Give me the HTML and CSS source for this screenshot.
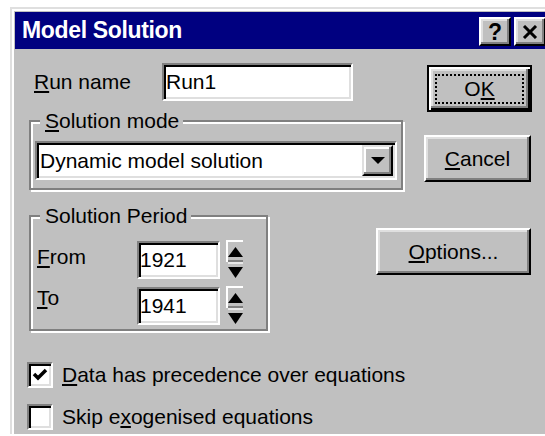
FILE: index.html
```html
<!DOCTYPE html>
<html lang="en">
<head>
<meta charset="utf-8">
<title>Model Solution</title>
<link rel="stylesheet" href="styles.css">
</head>
<body>
<div class="window">
  <div class="frame">
    <div class="titlebar">
      <span class="title">Model Solution</span>
      <span class="cap-btn help">?</span>
      <span class="cap-btn close">
        <svg width="16" height="14" viewBox="0 0 16 14"><path d="M2 1 L14 13 M14 1 L2 13" stroke="#000" stroke-width="3" fill="none"/></svg>
      </span>
    </div>

    <div class="content">
      <div class="row row-top">
        <div class="col-left">
          <div class="run-row">
            <span class="run-label"><u>R</u>un name</span>
            <div class="field run-field">Run1</div>
          </div>
          <div class="group mode-group">
            <span class="group-title"><u>S</u>olution mode</span>
            <div class="combo">
              <span class="combo-text">Dynamic model solution</span>
              <span class="combo-btn">
                <svg width="14" height="8" viewBox="0 0 14 8"><path d="M0 0 H14 L7 7 Z" fill="#000"/></svg>
              </span>
            </div>
          </div>
        </div>
        <div class="col-right">
          <button class="btn default ok"><span class="focus">O<u>K</u></span></button>
          <button class="btn cancel"><u>C</u>ancel</button>
        </div>
      </div>

      <div class="row row-mid">
        <div class="group period-group">
          <span class="group-title">Solution Period</span>
          <div class="period-row">
            <span class="period-label"><u>F</u>rom</span>
            <div class="field year">1921</div>
            <svg class="spin" width="18" height="40" viewBox="0 0 18 40">
              <rect x="0" y="0" width="17" height="2" fill="#fff"/>
              <rect x="0" y="0" width="2" height="22" fill="#fff"/>
              <path d="M2 17 H17 L9.5 7 Z" fill="#000"/>
              <rect x="2" y="20" width="15" height="2" fill="#808080"/>
              <rect x="2" y="22" width="15" height="2" fill="#e8e8e8"/>
              <path d="M2 27 H17 L9.5 38 Z" fill="#000"/>
            </svg>
          </div>
          <div class="period-row">
            <span class="period-label to-label"><u>T</u>o</span>
            <div class="field year">1941</div>
            <svg class="spin" width="18" height="40" viewBox="0 0 18 40">
              <rect x="0" y="0" width="17" height="2" fill="#fff"/>
              <rect x="0" y="0" width="2" height="22" fill="#fff"/>
              <path d="M2 17 H17 L9.5 7 Z" fill="#000"/>
              <rect x="2" y="20" width="15" height="2" fill="#808080"/>
              <rect x="2" y="22" width="15" height="2" fill="#e8e8e8"/>
              <path d="M2 27 H17 L9.5 38 Z" fill="#000"/>
            </svg>
          </div>
        </div>
        <button class="btn options"><u>O</u>ptions...</button>
      </div>

      <div class="checks">
        <div class="check-row">
          <span class="checkbox">
            <svg width="18" height="18" viewBox="0 0 18 18"><path d="M3 8 L7 12 L15 4" stroke="#000" stroke-width="3.5" fill="none"/></svg>
          </span>
          <span><u>D</u>ata has precedence over equations</span>
        </div>
        <div class="check-row">
          <span class="checkbox"></span>
          <span>Skip e<u>x</u>ogenised equations</span>
        </div>
      </div>
    </div>
  </div>
</div>
</body>
</html>
```

FILE: styles.css
```css
html, body {
  margin: 0;
  padding: 0;
}

body {
  background: #fff;
  overflow: hidden;
  width: 545px;
  height: 436px;
  font-family: "Liberation Sans", Arial, sans-serif;
  font-size: 21px;
  line-height: 24px;
  color: #000;
}

u {
  text-decoration-thickness: 2px;
  text-underline-offset: 2px;
}

/* window frame */
.window {
  margin: 7px 0 0 10px;
  width: 560px;
  height: 427px;
  box-sizing: border-box;
  border-top: 2px solid #dfdfdf;
  border-left: 2px solid #dfdfdf;
  background: #c0c0c0;
}

.frame {
  height: 100%;
  box-sizing: border-box;
  border-top: 2px solid #fff;
  border-left: 2px solid #fff;
  padding: 1px 0 0 1px;
}

/* caption */
.titlebar {
  height: 37px;
  background: #000080;
  display: flex;
  align-items: center;
  padding-left: 7px;
}

.title {
  color: #fff;
  font-weight: bold;
  font-size: 23px;
  letter-spacing: -0.35px;
  margin-top: -1px;
}

.cap-btn {
  width: 32px;
  height: 29px;
  box-sizing: border-box;
  align-self: flex-start;
  margin-top: 5px;
  background: #c0c0c0;
  border: 2px solid;
  border-color: #fff #000 #000 #fff;
  box-shadow: inset -2px -2px 0 #808080, inset 2px 2px 0 #dfdfdf;
  display: flex;
  align-items: center;
  justify-content: center;
}

.help {
  margin-left: auto;
  font-weight: bold;
  font-size: 23px;
}

.close {
  margin-left: 3px;
  margin-right: 24px;
}

/* dialog body */
.content {
  width: 517px;
  box-sizing: border-box;
  padding: 14px 0 0 14px;
}

.row {
  display: flex;
  justify-content: space-between;
  align-items: flex-start;
}

.col-left {
  width: 374px;
}

.col-right {
  display: flex;
  flex-direction: column;
  align-items: flex-end;
}

.run-row {
  display: flex;
  align-items: center;
  height: 38px;
}

.run-label {
  width: 128px;
  margin-left: 5px;
}

.field {
  height: 38px;
  box-sizing: border-box;
  background: #fff;
  border: 2px solid;
  border-color: #808080 #fff #fff #808080;
  box-shadow: inset 2px 2px 0 #000, inset -2px -2px 0 #dfdfdf;
  display: flex;
  align-items: center;
  padding-left: 2px;
  white-space: nowrap;
}

.run-field {
  width: 191px;
}

/* etched group boxes */
.group {
  position: relative;
  box-sizing: border-box;
  border: 2px solid #808080;
  box-shadow: inset 2px 2px 0 #fff, 2px 2px 0 #fff;
}

.group-title {
  position: absolute;
  top: -13px;
  left: 9px;
  padding: 0 4px 0 5px;
  background: #c0c0c0;
}

.mode-group {
  margin-top: 19px;
  height: 70px;
  padding: 19px 4px 0 4px;
}

.combo {
  height: 39px;
  box-sizing: border-box;
  background: #fff;
  border: 2px solid;
  border-color: #808080 #fff #fff #808080;
  box-shadow: inset 2px 2px 0 #000, inset -2px -2px 0 #dfdfdf;
  padding: 2px;
  display: flex;
  align-items: center;
}

.combo-text {
  flex: 1;
  padding-left: 1px;
}

.combo-btn {
  width: 31px;
  height: 100%;
  box-sizing: border-box;
  background: #c0c0c0;
  border: 2px solid;
  border-color: #dfdfdf #000 #000 #dfdfdf;
  box-shadow: inset -2px -2px 0 #808080, inset 2px 2px 0 #fff;
  display: flex;
  align-items: center;
  justify-content: center;
}

/* push buttons */
.btn {
  font: inherit;
  color: #000;
  padding: 0;
  margin: 0;
  height: 47px;
  box-sizing: border-box;
  background: #c0c0c0;
  border: 2px solid;
  border-color: #fff #000 #000 #fff;
  box-shadow: inset -2px -2px 0 #808080, inset 2px 2px 0 #dfdfdf;
  display: flex;
  align-items: center;
  justify-content: center;
}

.btn.default {
  border-color: #000;
  box-shadow: inset 2px 2px 0 #fff, inset -2px -2px 0 #000, inset -4px -4px 0 #808080, inset 4px 4px 0 #dfdfdf;
}

.ok {
  width: 105px;
  margin-top: 2px;
}

.focus {
  width: 89px;
  height: 30px;
  box-sizing: border-box;
  border: 2px dotted #000;
  display: flex;
  align-items: center;
  justify-content: center;
}

.cancel {
  width: 107px;
  margin-top: 23px;
  margin-right: 1px;
}

.row-mid {
  margin-top: 25px;
}

.period-group {
  width: 239px;
  height: 116px;
  padding: 23px 0 0 6px;
}

.period-row {
  display: flex;
  align-items: center;
  height: 40px;
}

.period-row + .period-row {
  margin-top: 6px;
}

.period-label {
  width: 100px;
  align-self: flex-start;
  margin-top: 5px;
}

.period-label.to-label {
  margin-top: 0;
}

.year {
  width: 83px;
  padding-left: 1px;
}

.spin {
  margin-left: 6px;
}

.options {
  width: 155px;
  margin-top: 13px;
  margin-right: 1px;
}

/* check boxes */
.checks {
  margin: 31px 0 0 -2px;
  display: flex;
  flex-direction: column;
  gap: 16px;
}

.check-row {
  display: flex;
  align-items: center;
  height: 26px;
  gap: 9px;
}

.checkbox {
  width: 26px;
  height: 26px;
  box-sizing: border-box;
  background: #fff;
  border: 2px solid;
  border-color: #808080 #fff #fff #808080;
  box-shadow: inset 2px 2px 0 #000, inset -2px -2px 0 #dfdfdf;
  display: flex;
  align-items: center;
  justify-content: center;
}
```
